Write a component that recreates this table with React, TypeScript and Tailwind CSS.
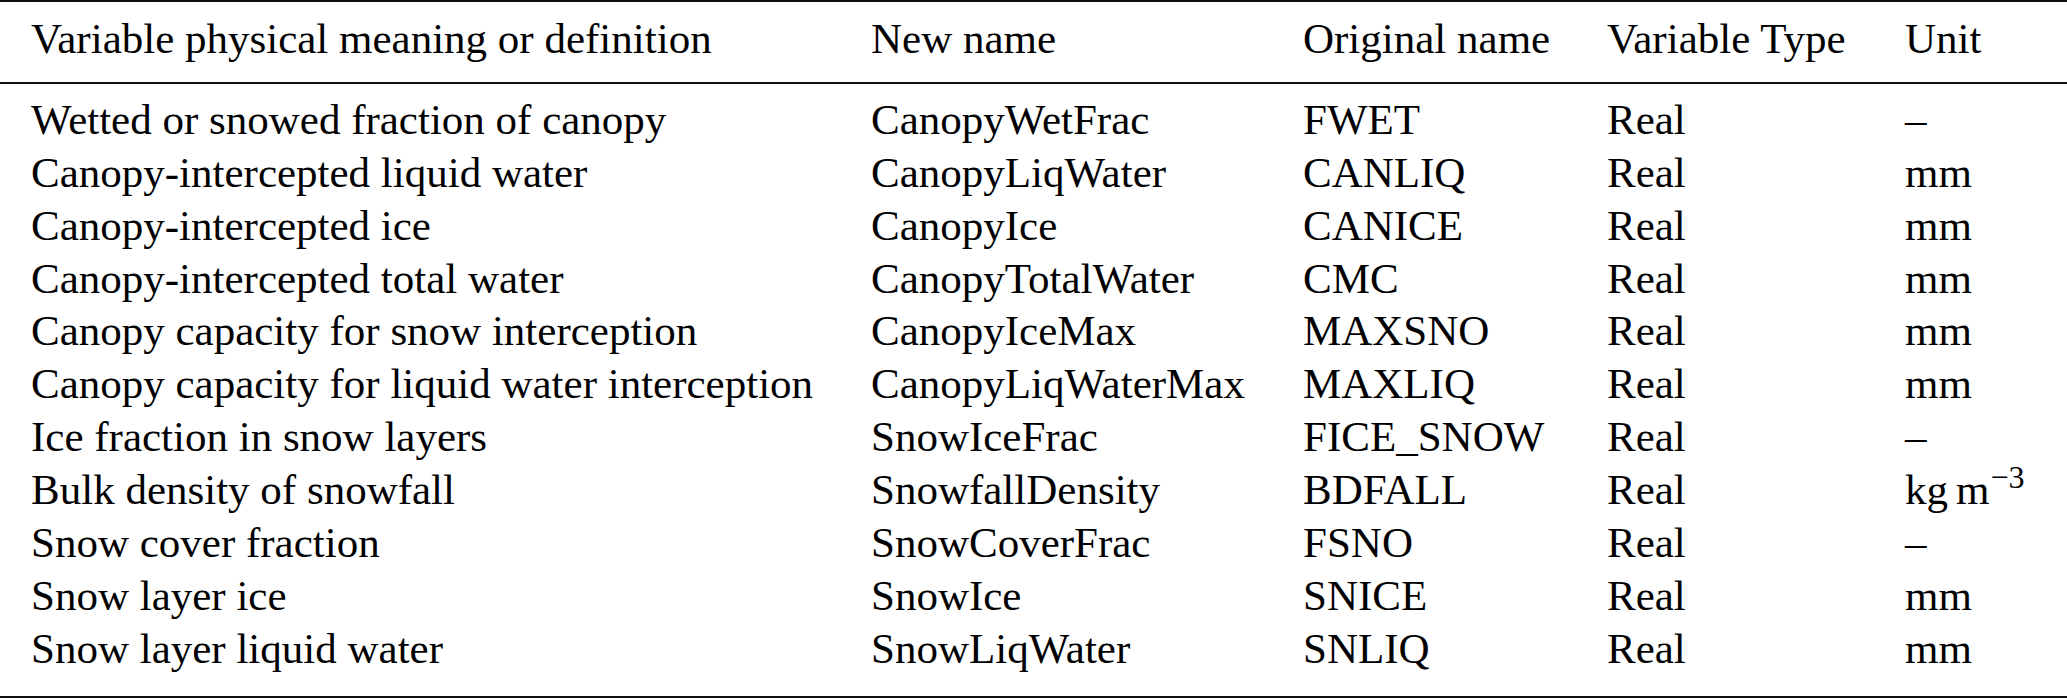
import React from "react";

type Row = { def: string; name: string; orig: string; type: string; unit: React.ReactNode };

const rows: Row[] = [
  { def: "Wetted or snowed fraction of canopy", name: "CanopyWetFrac", orig: "FWET", type: "Real", unit: "–" },
  { def: "Canopy-intercepted liquid water", name: "CanopyLiqWater", orig: "CANLIQ", type: "Real", unit: "mm" },
  { def: "Canopy-intercepted ice", name: "CanopyIce", orig: "CANICE", type: "Real", unit: "mm" },
  { def: "Canopy-intercepted total water", name: "CanopyTotalWater", orig: "CMC", type: "Real", unit: "mm" },
  { def: "Canopy capacity for snow interception", name: "CanopyIceMax", orig: "MAXSNO", type: "Real", unit: "mm" },
  { def: "Canopy capacity for liquid water interception", name: "CanopyLiqWaterMax", orig: "MAXLIQ", type: "Real", unit: "mm" },
  { def: "Ice fraction in snow layers", name: "SnowIceFrac", orig: "FICE_SNOW", type: "Real", unit: "–" },
  {
    def: "Bulk density of snowfall",
    name: "SnowfallDensity",
    orig: "BDFALL",
    type: "Real",
    unit: (
      <span className="whitespace-nowrap">
        kg<span className="ml-[8px]">m</span>
        <span className="relative top-[-16px] ml-[1px] text-[32px] leading-none">−3</span>
      </span>
    ),
  },
  { def: "Snow cover fraction", name: "SnowCoverFrac", orig: "FSNO", type: "Real", unit: "–" },
  { def: "Snow layer ice", name: "SnowIce", orig: "SNICE", type: "Real", unit: "mm" },
  { def: "Snow layer liquid water", name: "SnowLiqWater", orig: "SNLIQ", type: "Real", unit: "mm" },
];

const grid = "grid grid-cols-[871px_432px_304px_298px_1fr] whitespace-nowrap";

export default function App() {
  return (
    <div className="w-[2067px] h-[698px] overflow-hidden bg-white text-black font-['Liberation_Serif','Times_New_Roman',serif] text-[43px]">
      <div className="h-[2px] bg-[#111]" />
      <div className={`${grid} leading-[52.9px] pt-[11px] pb-[16px]`}>
        <div className="pl-[31px]">Variable physical meaning or definition</div>
        <div>New name</div>
        <div>Original name</div>
        <div>Variable Type</div>
        <div>Unit</div>
      </div>
      <div className="h-[2px] bg-[#111]" />
      <div className="pt-[10px] pb-[20px]">
        {rows.map((r, i) => (
          <div key={i} className={`${grid} h-[52.9px] leading-[52.9px]`}>
            <div className="pl-[31px]">{r.def}</div>
            <div>{r.name}</div>
            <div>{r.orig}</div>
            <div>{r.type}</div>
            <div>{r.unit}</div>
          </div>
        ))}
      </div>
      <div className="h-[2px] bg-[#111]" />
    </div>
  );
}
